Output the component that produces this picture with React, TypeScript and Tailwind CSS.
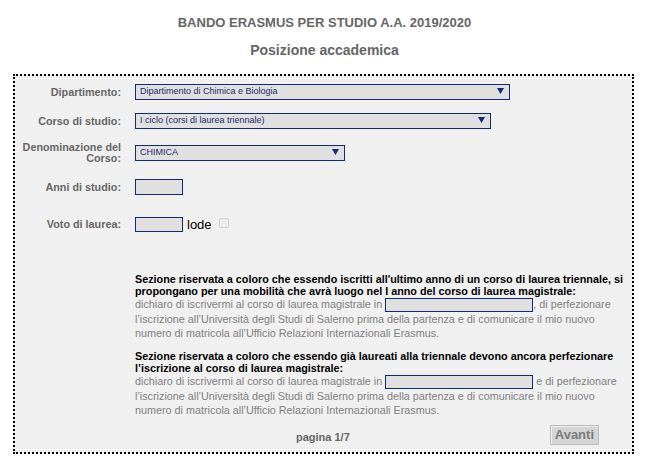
import type { ReactNode } from 'react';

function Arrow() {
  return (
    <svg width="7" height="6" viewBox="0 0 7 6" className="mb-[2px] shrink-0" aria-hidden="true">
      <path d="M0 0h7L3.5 6z" fill="#0f2a78" />
    </svg>
  );
}

type FakeSelectProps = {
  value: string;
  className: string;
};

function FakeSelect({ value, className }: FakeSelectProps) {
  return (
    <div
      className={`flex h-[16px] items-center justify-between border border-[#0f2a78] bg-[#e0e0e0] pl-[4px] pr-[5px] text-[9px] text-[#1b2a6b] ${className}`}
    >
      <span className="whitespace-nowrap">{value}</span>
      <Arrow />
    </div>
  );
}

function Label({ children }: { children: ReactNode }) {
  return (
    <div className="w-[106px] shrink-0 text-right text-[10.8px] font-bold leading-[11px] text-[#666]">
      {children}
    </div>
  );
}

function TextBox({ className }: { className: string }) {
  return <div className={`border border-[#0f2a78] bg-[#e0e0e0] ${className}`} />;
}

function InlineBox() {
  return (
    <span className="inline-block h-[14px] w-[148px] border border-[#0f2a78] bg-[#e0e0e0] align-middle" />
  );
}

export default function App() {
  return (
    <div className="h-[461px] w-[649px] bg-white font-['Liberation_Sans',Arial,sans-serif]">
      <h1 className="pt-[15px] text-center text-[13px] font-bold leading-[15px] text-[#666]">
        BANDO ERASMUS PER STUDIO A.A. 2019/2020
      </h1>
      <h2 className="mt-[12px] text-center text-[14px] font-bold leading-[16px] text-[#666]">
        Posizione accademica
      </h2>

      <div className="ml-[13px] mt-[16px] w-[621px] border-2 border-dotted border-black bg-[#f0f0f0] pb-[7px]">
        <div className="mt-[8px] flex items-center gap-[14px]">
          <Label>Dipartimento:</Label>
          <FakeSelect value="Dipartimento di Chimica e Biologia" className="w-[375px]" />
        </div>

        <div className="mt-[13px] flex items-center gap-[14px]">
          <Label>Corso di studio:</Label>
          <FakeSelect value="I ciclo (corsi di laurea triennale)" className="w-[356px]" />
        </div>

        <div className="mt-[13px] flex items-start gap-[14px]">
          <Label>Denominazione del Corso:</Label>
          <FakeSelect value="CHIMICA" className="mt-[3px] w-[210px]" />
        </div>

        <div className="mt-[15px] flex items-center gap-[14px]">
          <Label>Anni di studio:</Label>
          <TextBox className="h-[16px] w-[48px]" />
        </div>

        <div className="mt-[22px] flex items-center gap-[14px]">
          <Label>Voto di laurea:</Label>
          <div className="flex items-center">
            <TextBox className="h-[15px] w-[48px]" />
            <span className="ml-[4px] text-[13px] leading-[15px] text-black">lode</span>
            <span className="ml-[7px] mb-[4px] h-[10px] w-[10px] rounded-[2px] border border-[#cfcfcf] bg-[#ececec]" />
          </div>
        </div>

        <div className="ml-[120px] mt-[41px] whitespace-nowrap text-[10.8px]">
          <p className="font-bold leading-[12px] text-black">
            Sezione riservata a coloro che essendo iscritti all'ultimo anno di un corso di laurea triennale, si
            <br />
            propongano per una mobilità che avrà luogo nel I anno del corso di laurea magistrale:
          </p>
          <p className="leading-[14px] text-[#808080]">
            dichiaro di iscrivermi al corso di laurea magistrale in <InlineBox />, di perfezionare
            <br />
            l’iscrizione all’Università degli Studi di Salerno prima della partenza e di comunicare il mio nuovo
            <br />
            numero di matricola all’Ufficio Relazioni Internazionali Erasmus.
          </p>

          <p className="mt-[10px] font-bold leading-[12px] text-black">
            Sezione riservata a coloro che essendo già laureati alla triennale devono ancora perfezionare
            <br />
            l’iscrizione al corso di laurea magistrale:
          </p>
          <p className="leading-[14px] text-[#808080]">
            dichiaro di iscrivermi al corso di laurea magistrale in <InlineBox /> e di perfezionare
            <br />
            l’iscrizione all’Università degli Studi di Salerno prima della partenza e di comunicare il mio nuovo
            <br />
            numero di matricola all’Ufficio Relazioni Internazionali Erasmus.
          </p>
        </div>

        <div className="mt-[8px] flex items-center">
          <span className="ml-[281px] mt-[3px] text-[11px] font-bold text-[#666]">pagina 1/7</span>
          <button
            type="button"
            className="ml-auto mr-[33px] h-[20px] border border-[#bdbdbd] bg-[#d5d5d5] px-[4px] text-[13px] font-bold leading-[18px] text-[#7a7a7a] shadow-[inset_1px_1px_0_#efefef]"
          >
            Avanti
          </button>
        </div>
      </div>
    </div>
  );
}
